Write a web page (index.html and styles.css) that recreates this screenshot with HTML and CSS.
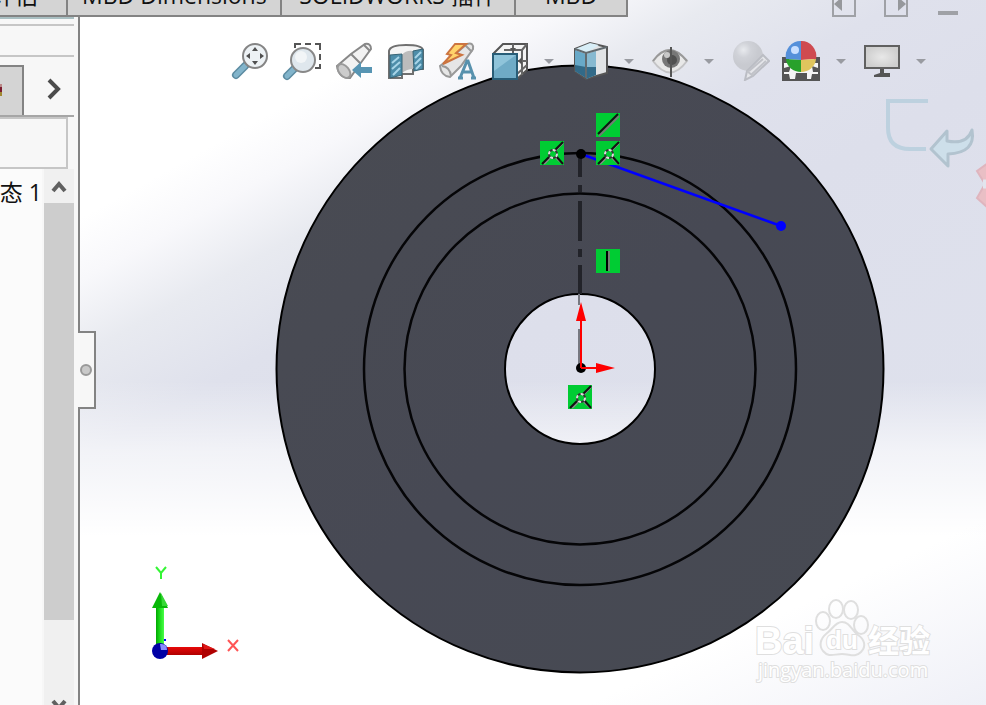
FILE: index.html
```
<!DOCTYPE html>
<html lang="zh-CN">
<head>
<meta charset="utf-8">
<title>SOLIDWORKS</title>
<link rel="stylesheet" href="styles.css">
</head>
<body>
<div class="app">
  <header class="topbar">
    <nav class="tabs">
      <button class="tab tab-evaluate">评估</button>
      <button class="tab tab-dimensions">MBD Dimensions</button>
      <button class="tab tab-addins">SOLIDWORKS 插件</button>
      <button class="tab tab-mbd">MBD</button>
    </nav>
    <div class="window-controls">
      <button aria-label="Dock left"><svg width="24" height="17" viewBox="0 0 24 17"><path d="M1 0V16H23V0" fill="none" stroke="#9fa1a6" stroke-width="2"/><path d="M2 4L10 -3V11Z" fill="#96989c"/></svg></button>
      <button aria-label="Dock right"><svg width="24" height="17" viewBox="0 0 24 17"><path d="M1 0V16H23V0" fill="none" stroke="#9fa1a6" stroke-width="2"/><path d="M22 4L14 -3V11Z" fill="#96989c"/></svg></button>
      <button aria-label="Minimize"><svg width="24" height="17" viewBox="0 0 24 17"><path d="M2 13H22" stroke="#9fa1a6" stroke-width="4"/></svg></button>
    </div>
  </header>

  <main class="workspace">
    <aside class="panel">
      <div class="panel-strip"></div>
      <div class="panel-header"></div>
      <div class="panel-tabs">
        <button class="panel-tab" aria-label="Manager"><svg width="4" height="14" viewBox="0 0 4 14"><path d="M0 0H2V3H0Z" fill="#b88"/><path d="M0 3H2V8H0Z" fill="#7b1c2e"/><path d="M0 8H2V12H0Z" fill="#a08830"/></svg></button>
        <button class="panel-more" aria-label="More"><svg width="14" height="22" viewBox="0 0 14 22"><path d="M2 2L11 11L2 20" fill="none" stroke="#4b4b4b" stroke-width="4"/></svg></button>
      </div>
      <div class="filter"></div>
      <div class="tree">
        <div class="tree-items"><span>态 1</span></div>
        <div class="scrollbar">
          <button class="scroll-button" aria-label="Scroll up"><svg width="16" height="14" viewBox="0 0 16 14"><path d="M2 12L8 5L14 12" fill="none" stroke="#606060" stroke-width="4"/></svg></button>
          <div class="scroll-track"><div class="scroll-thumb"></div></div>
          <button class="scroll-button scroll-down" aria-label="Scroll down"><svg width="16" height="14" viewBox="0 0 16 14"><path d="M2 2L8 9L14 2" fill="none" stroke="#606060" stroke-width="4"/></svg></button>
        </div>
      </div>
      <button class="splitter" aria-label="Collapse panel"><span class="grip"></span></button>
    </aside>

    <section class="viewport">
      <svg class="scene" viewBox="80 17 906 688" preserveAspectRatio="xMinYMin meet">
        <defs>
          <linearGradient id="disc" x1="0" y1="0" x2="1" y2="1"><stop offset="0" stop-color="#494b52"/><stop offset=".5" stop-color="#474954"/><stop offset="1" stop-color="#474a52"/></linearGradient>
          <linearGradient id="axisY"><stop offset="0" stop-color="#00a800"/><stop offset=".5" stop-color="#1ddd1d"/><stop offset="1" stop-color="#48ff48"/></linearGradient>
          <linearGradient id="axisX" x2="0" y2="1"><stop offset="0" stop-color="#e80808"/><stop offset="1" stop-color="#b00000"/></linearGradient>
          <g id="coincident"><rect width="24" height="24" fill="#00cc33"/><path d="M4 23L10 17M16 17L23 23M16 9L23 2" stroke="#8a8a8a" stroke-width="2"/><path d="M2 23L9 16M16 15L23 23M15 9L23 1" stroke="#111" stroke-width="2"/><circle cx="13" cy="13" r="4" fill="none" stroke="#333" stroke-width="2"/><circle cx="13" cy="13" r="4" fill="none" stroke="#ddd" stroke-width="2" stroke-dasharray="3 3"/></g>
        </defs>

        <path d="M276.500 369a303.500 303.500 0 1 0 607 0a303.500 303.500 0 1 0-607 0ZM505 369a75 75 0 1 1 150 0a75 75 0 1 1-150 0Z" fill="url(#disc)" fill-rule="evenodd" stroke="#000" stroke-width="2"/>
        <g fill="none" stroke="#050507" stroke-width="2.500"><circle cx="580" cy="369" r="216"/><circle cx="580" cy="369" r="175.500"/></g>
        <path d="M580 154V177M580 185V192M580 201V241M580 249V257M580 265V294" stroke="#222329" stroke-width="4"/>
        <path d="M579 294V305M579 329V365" stroke="#777981" stroke-width="2"/>
        <path d="M581 154L781 226" stroke="#00f" stroke-width="2.500"/>
        <circle cx="581" cy="154" r="5"/><circle cx="781" cy="226" r="5" fill="#00f"/>

        <circle cx="581" cy="368" r="5"/>
        <path d="M581 368V318M581 368H598" stroke="#f00" stroke-width="2"/>
        <path d="M581 302L586 321H576ZM615 368L596 363V373Z" fill="#f00"/>

        <use href="#coincident" x="540" y="141"/><use href="#coincident" x="596" y="141"/><use href="#coincident" x="568" y="385"/>
        <rect x="596" y="113" width="24" height="24" fill="#00cc33"/><path d="M599 136L619 116" stroke="#777" stroke-width="2"/><path d="M598 134L618 114" stroke="#111" stroke-width="2"/>
        <rect x="596" y="249" width="24" height="24" fill="#00cc33"/><path d="M607 251V271" stroke="#000" stroke-width="2"/><path d="M609 251V271" stroke="#718471" stroke-width="2"/>

        <path d="M156 606H164V646H156Z" fill="url(#axisY)"/><path d="M160 592L168 608H152Z" fill="#08b808"/><path d="M161 593L168 606H162Z" fill="#35d835"/>
        <path d="M166 647H203V655H166Z" fill="url(#axisX)"/><path d="M202 643L218 651L202 659Z" fill="#b00000"/><path d="M203 644L215 649L204 649Z" fill="#df1616"/>
        <circle cx="160" cy="651" r="8" fill="#0000a5"/><path d="M160 644Q167 643 167 650H161Z" fill="#8b8bff"/><path d="M164 639H166V641H164Z" fill="#00f"/>
        <path d="M156 567L161 573L166 567M161 573V579" fill="none" stroke="#35f535" stroke-width="2"/>
        <path d="M228 640L238 651M238 640L228 651" stroke="#ff5555" stroke-width="2"/>

        <g class="watermark">
          <g class="paw"><ellipse cx="823" cy="621" rx="7" ry="9"/><ellipse cx="836" cy="609" rx="7" ry="9"/><ellipse cx="851" cy="610" rx="7" ry="9"/><ellipse cx="861" cy="625" rx="7" ry="9"/><path d="M842 622C835 622 833 629 826 634C820 639 819 646 823 651C829 658 834 654 842 654C850 654 855 658 861 652C867 646 864 639 858 635C851 630 850 622 842 622Z"/></g>
          <text class="mark-brand" x="755" y="654">Bai</text>
          <text class="mark-du" x="826" y="649">du</text>
          <text class="mark-cjk" x="868" y="652">经验</text>
          <text class="mark-url" x="758" y="677">jingyan.baidu.com</text>
        </g>
      </svg>

      <div class="toolbar">
        <button class="tool" aria-label="Zoom to fit"><svg viewBox="0 0 40 40"><path d="M6 34L15 25" stroke="#5c8ba1" stroke-width="8" stroke-linecap="round"/><path d="M6 34L15 25" stroke="#82b4cb" stroke-width="5" stroke-linecap="round"/><circle cx="25" cy="15" r="12" fill="#edf2f5" stroke="#858585" stroke-width="2"/><path d="M25 6L28 10H22ZM25 24L22 20H28ZM16 15L20 12V18ZM34 15L30 12V18Z" fill="#505050"/></svg></button>
        <button class="tool" aria-label="Zoom to area"><svg viewBox="0 0 40 40"><path d="M13 7V3H19M23 3H29M33 3H38V9M38 13V19M38 23V27H33" fill="none" stroke="#555" stroke-width="2"/><path d="M5 35L14 26" stroke="#5c8ba1" stroke-width="8" stroke-linecap="round"/><path d="M5 35L14 26" stroke="#82b4cb" stroke-width="5" stroke-linecap="round"/><circle cx="21" cy="19" r="12" fill="#dfe7ed" stroke="#888" stroke-width="2"/><circle cx="19" cy="16" r="6" fill="#f2f5f7"/></svg></button>
        <button class="tool" aria-label="Previous view"><svg viewBox="0 0 40 40"><path d="M3 25L17 13L31 3Q37 2 37 8L26 23L16 37Q5 37 3 25Z" fill="#f2f2f2" stroke="#888" stroke-width="2"/><ellipse cx="10" cy="30" rx="5" ry="8" transform="rotate(-40 10 30)" fill="#ccc" stroke="#999" stroke-width="2"/><path d="M17 13L26 22M30 4L36 10" stroke="#888" stroke-width="2"/><path d="M18 29L27 21V26H38V32H27V37Z" fill="#5795b3"/></svg></button>
        <button class="tool" aria-label="Section view"><svg viewBox="0 0 40 40"><path d="M3 10Q4 4 20 4Q36 4 37 9V28H27V33H16V37H3Z" fill="#f4f4f4" stroke="#707070" stroke-width="2"/><path d="M16 14Q20 9 27 10V28Q21 28 16 32Z" fill="#bcbcbc"/><path d="M4 14L16 13V34L4 37ZM27 10L37 8V28L28 30Z" fill="#4d8da9" stroke="#376374" stroke-width="1"/><path d="M6 22L13 16M6 28L14 21M7 34L14 27M29 17L35 11M29 23L35 17M30 28L35 23" stroke="#a8d5e8" stroke-width="2"/></svg></button>
        <button class="tool" aria-label="Dynamic annotation views"><svg viewBox="0 0 40 40"><path d="M2 25L16 14L29 3Q36 1 35 8L23 25L12 36Q3 35 2 25Z" fill="#e6e6e6" stroke="#999" stroke-width="2"/><path d="M4 25Q12 26 13 35M27 4L34 11" fill="none" stroke="#999" stroke-width="2"/><path d="M17 3L9 13L13 14L5 23L24 14L18 12L28 3Z" fill="#ffd36a" stroke="#cc7440" stroke-width="2"/><path d="M22 37L29 20H30L36 37M25 31H33M20 37H25M33 37H38" fill="none" stroke="#5791ad" stroke-width="3"/></svg></button>
        <div class="tool-group"><button class="tool" aria-label="View orientation"><svg viewBox="0 0 40 40"><path d="M3 13L13 3H37V29L27 38" fill="#f4f4f4" stroke="#555" stroke-width="2"/><path d="M23 3V13M14 9H32M32 9V34M27 20H37M32 9L37 3M27 33L37 24" fill="none" stroke="#666" stroke-width="2"/><path d="M20 7H26L23 11ZM28 20L32 16V24Z" fill="#555"/><path d="M3 13H27V38H3Z" fill="#6fabc6" stroke="#285d77" stroke-width="2"/><path d="M4 14H26L4 30Z" fill="#8fc4da"/></svg></button><button class="drop" aria-label="View orientation options"></button></div>
        <div class="tool-group"><button class="tool" aria-label="Display style"><svg viewBox="0 0 40 40"><path d="M5 8L20 2L37 6V32L16 38L5 30Z" fill="#e1e3e5" stroke="#555" stroke-width="2"/><path d="M5 8L20 2L29 4L16 12Z" fill="#d8eef7"/><path d="M5 9L16 13V37L5 30Z" fill="#68a9c8"/><path d="M16 13L26 10V34L16 38Z" fill="#87b9d0"/><path d="M5 24L16 26V37L5 30ZM16 26H26V34L16 38Z" fill="#326a88"/><path d="M5 8L16 12L37 6M16 12V37" fill="none" stroke="#626b70" stroke-width="2"/></svg></button><button class="drop" aria-label="Display style options"></button></div>
        <div class="tool-group"><button class="tool" aria-label="Hide or show items"><svg viewBox="0 0 40 40"><path d="M3 20Q19 -2 37 20Q20 43 3 20Z" fill="#e8e8e8" stroke="#c4c4c6" stroke-width="2"/><path d="M3 20Q19 -2 37 20" fill="none" stroke="#999" stroke-width="2"/><circle cx="21" cy="18" r="9" fill="#777"/><circle cx="22" cy="19" r="5" fill="#505050"/><circle cx="17" cy="14" r="3" fill="#c8c8c8"/><path d="M21 6V36" stroke="#555" stroke-width="2"/></svg></button><button class="drop" aria-label="Hide or show options"></button></div>
        <button class="tool" aria-label="Edit appearance" disabled><svg viewBox="0 0 40 40"><defs><radialGradient id="ball" cx=".35" cy=".3"><stop offset="0" stop-color="#e8eaee"/><stop offset=".5" stop-color="#d0d2d8"/><stop offset="1" stop-color="#c8cad0"/></radialGradient></defs><circle cx="18" cy="15" r="15" fill="url(#ball)"/><path d="M15 39L17 30L33 14L39 20L23 35Z" fill="#e5e6ea" stroke="#bbbdc4" stroke-width="2"/><path d="M19 30L33 18M22 33L36 20M17 30L23 35" stroke="#c0c2c8" stroke-width="2"/></svg></button>
        <div class="tool-group"><button class="tool" aria-label="Apply scene"><svg viewBox="0 0 40 40"><path d="M1 17H37V39H1Z" fill="#f5f5f5" stroke="#555" stroke-width="2"/><path d="M2 18H7V22H2ZM2 27L9 25L7 31H2ZM14 32H25V38H13ZM7 33L2 33V38H8ZM30 25L36 27V31H31ZM30 33H36V38H29ZM32 18H36V22H32Z" fill="#555"/><path d="M19 0A15 15 0 0 0 4 18L19 19Z" fill="#5590da"/><path d="M19 0A15 15 0 0 1 34 18L19 19Z" fill="#cf4a50"/><path d="M4 18A15 14 0 0 0 19 31V19Z" fill="#28a12b"/><path d="M34 18A15 14 0 0 1 19 31V19Z" fill="#dfc55d"/><circle cx="13" cy="9" r="4" fill="#c9dfff"/></svg></button><button class="drop" aria-label="Scene options"></button></div>
        <div class="tool-group"><button class="tool" aria-label="View settings"><svg viewBox="0 0 40 40"><defs><radialGradient id="screen"><stop offset="0" stop-color="#e8e8e8"/><stop offset="1" stop-color="#cfcfcf"/></radialGradient></defs><path d="M3 5H37V27H3Z" fill="url(#screen)" stroke="#606060" stroke-width="2"/><path d="M18 28H22V32H28V36H12V34L18 32Z" fill="#555"/></svg></button><button class="drop" aria-label="View settings options"></button></div>
      </div>

      <div class="confirm-corner">
        <svg width="106" height="120" viewBox="880 95 106 120"><path d="M928 101H888V128Q888 149 910 149H926" fill="none" stroke="#bdd1df" stroke-width="4"/><path d="M931 149L947 131V141Q967 145 972 130Q976 153 948 154V166Z" fill="#cddfea" stroke="#b2c3cf" stroke-width="3" stroke-linejoin="round"/><path d="M988 163L977 171L985 184L977 198L988 208" fill="#e9bfc5" stroke="#dfb5be" stroke-width="2"/><path d="M983 184H986" stroke="#e2e5ee" stroke-width="9"/></svg>
      </div>
    </section>
  </main>
</div>
</body>
</html>
```
FILE: styles.css
```
*, ::before { box-sizing: border-box; }
body { margin: 0; font-family: "Open Sans", "Noto Sans CJK SC", sans-serif; color: #111; }
button { margin: 0; padding: 0; border: 0; background: none; font: inherit; color: inherit; }
svg { display: block; }

.app {
  display: flex;
  flex-direction: column;
  height: 100vh;
  overflow: hidden;
  background:
    linear-gradient(155deg, transparent 84%, #eff0f7 100%),
    linear-gradient(180deg, transparent 0, transparent 54%, rgba(255, 255, 255, .6) 64%, #fff 76%),
    linear-gradient(151deg, #fff 0, #fff 21%, #f8f8fb 26%, #e8eaf0 32%, #dfe1ec 40%, #dddfeb 50%, #e0e3ee 100%);
}

.topbar { display: flex; justify-content: space-between; flex: none; height: 17px; overflow: hidden; }
.tabs { display: flex; align-items: flex-end; background: #d4d4d4; border-bottom: 2px solid #838383; }
.tab { flex: none; height: 40px; padding: 0 14px; border-right: 2px solid #838383; font-size: 23px; line-height: 24px; white-space: nowrap; }
.tab-evaluate { display: flex; align-items: center; justify-content: flex-end; width: 68px; padding-right: 28px; }
.tab-dimensions { width: 214px; }
.tab-addins { width: 234px; }
.tab-mbd { width: 112px; }
.window-controls { display: flex; gap: 28px; padding-right: 26px; }

.workspace { display: flex; flex: 1; min-height: 0; }

.panel { position: relative; display: flex; flex-direction: column; flex: none; width: 80px; background: #f7f7f7; border-right: 2px solid #838383; }
.panel-strip { height: 9px; margin-right: 4px; border-top: 2px solid #a9bfc2; border-bottom: 2px solid #c6c6c6; }
.panel-header { height: 31px; margin-right: 4px; border-bottom: 2px solid #c6c6c6; }
.panel-tabs { display: flex; align-items: flex-end; gap: 23px; height: 60px; margin-right: 4px; border-bottom: 2px solid #a6a6a6; }
.panel-tab { display: flex; align-items: center; width: 24px; height: 50px; background: #d4d4d4; border: 2px solid #838383; border-left: 0; border-bottom: 0; }
.panel-more { padding-bottom: 15px; }
.filter { height: 52px; margin-right: 10px; border: 2px solid #c6c6c6; border-left: 0; }
.tree { display: flex; flex: 1; min-height: 0; margin-right: 4px; }
.tree-items { display: flex; flex: 1; justify-content: flex-end; overflow: hidden; padding-top: 8px; margin-right: 2px; background: #fbfbfb; font-size: 23px; line-height: 30px; white-space: nowrap; }
.scrollbar { display: flex; flex-direction: column; flex: none; width: 30px; background: #f0f0f0; }
.scroll-button { display: flex; align-items: center; justify-content: center; flex: none; height: 34px; }
.scroll-down { align-items: flex-end; height: 12px; overflow: visible; }
.scroll-down svg { margin-bottom: -8px; }
.scroll-track { flex: 1; }
.scroll-thumb { height: 85%; background: #cdcdcd; }
.splitter { position: absolute; z-index: 2; top: 314px; right: -18px; display: flex; align-items: center; justify-content: center; width: 18px; height: 78px; background: #f7f7f7; border: 2px solid #838383; border-left: 0; }
.grip { width: 12px; height: 12px; background: #c9c9c9; border: 2px solid #999; border-radius: 50%; }

.viewport { position: relative; flex: 1; min-width: 0; overflow: hidden; }
.scene { position: absolute; inset: 0; width: 100%; height: 100%; }
.toolbar { position: relative; display: flex; gap: 12px; padding: 24px 0 0 150px; }
.tool { flex: none; width: 40px; height: 40px; }
.tool svg { width: 40px; height: 40px; }
.tool-group { display: flex; flex: none; }
.drop { width: 28px; padding-left: 10px; }
.drop::before { content: ""; display: block; width: 10px; margin: 0 auto; border: 5px solid transparent; border-top-color: #999ba1; border-bottom: 0; }
.confirm-corner { position: absolute; top: 78px; right: 0; }

.watermark { fill: #fff; stroke: #dfdfdf; stroke-width: 2px; paint-order: stroke; }
.paw { fill: none; stroke-width: 2px; }
.mark-brand { font: 700 38px "Liberation Sans", sans-serif; }
.mark-du { font: 700 26px "Liberation Sans", sans-serif; }
.mark-cjk { font: 700 31px "Noto Sans CJK SC", sans-serif; }
.mark-url { font: 400 20px "Open Sans", sans-serif; }
```
